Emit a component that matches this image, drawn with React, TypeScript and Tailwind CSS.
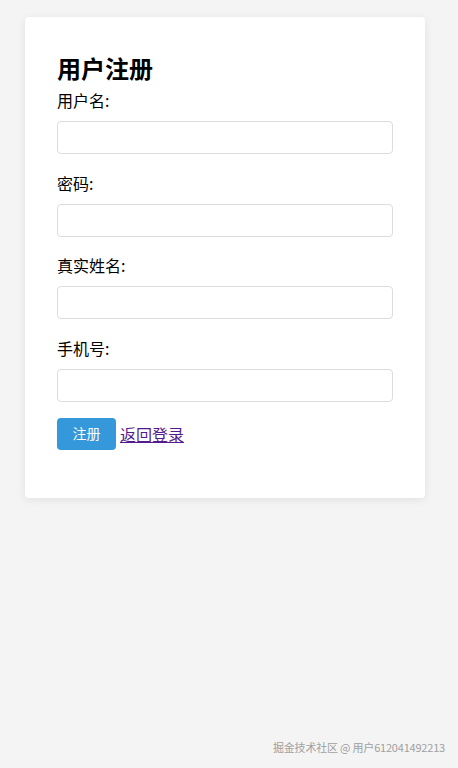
import React from "react";

const Field = ({ label, type = "text" }: { label: string; type?: string }) => {
  return (
    <div className="flex flex-col">
      <label className="text-[16px] leading-[24px] text-black">{label}</label>
      <input
        type={type}
        className="mt-[9px] mb-[16.67px] h-[33px] w-full rounded-[4px] border border-[#dcdcdc] bg-white px-2 text-[14px] outline-none"
      />
    </div>
  );
};

export default function App() {
  return (
    <div
      className="relative min-h-[768px] bg-[#f4f4f4] pt-[17px]"
      style={{ fontFamily: '"Microsoft YaHei", "Noto Sans CJK SC", sans-serif' }}
    >
      <div className="ml-[25px] w-[400px] rounded-[4px] bg-white px-[32px] pt-[35px] pb-[48px] shadow-[0_2px_10px_rgba(0,0,0,0.08)]">
        <h2 className="text-[24px] leading-[32px] font-bold text-black">用户注册</h2>
        <form className="mt-[4px] flex flex-col">
          <Field label="用户名:" />
          <Field label="密码:" type="password" />
          <Field label="真实姓名:" />
          <Field label="手机号:" />
          <div className="-mt-[1px] flex items-center gap-[4px]">
            <button
              type="button"
              className="h-[32px] w-[59px] rounded-[4px] bg-[#3498db] text-[14px] text-white"
            >
              注册
            </button>
            <a href="#" className="text-[16px] leading-[24px] text-[#551a8b] underline">
              返回登录
            </a>
          </div>
        </form>
      </div>
      <div className="absolute right-[13px] bottom-[13px] text-[11px] leading-[16px] tracking-[-0.2px] text-[#a0a0a0]">
        掘金技术社区 @ 用户612041492213
      </div>
    </div>
  );
}
